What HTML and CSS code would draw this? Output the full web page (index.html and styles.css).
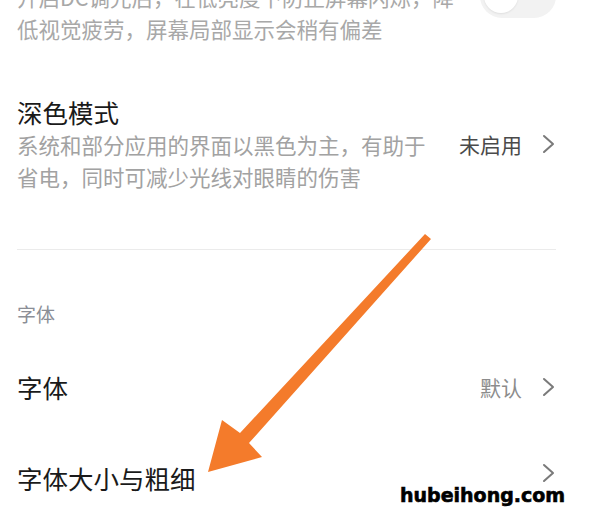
FILE: index.html
```html
<!DOCTYPE html>
<html lang="zh">
<head>
<meta charset="utf-8">
<link rel="stylesheet" href="styles.css">
</head>
<body>
<div class="screen">
  <div class="page">
    <div class="row row-dc">
      <div class="desc desc-dc">开启DC调光后，在低亮度下防止屏幕闪烁，降低视觉疲劳，屏幕局部显示会稍有偏差</div>
      <div class="switch"><span class="knob"></span></div>
    </div>

    <div class="row row-dark">
      <div class="text">
        <div class="title">深色模式</div>
        <div class="desc">系统和部分应用的界面以黑色为主，有助于省电，同时可减少光线对眼睛的伤害</div>
      </div>
      <div class="value">
        <span class="value-text dark">未启用</span>
        <svg class="chev" viewBox="0 0 14 20" width="14" height="20"><polyline points="2,2 11,10 2,18" /></svg>
      </div>
    </div>

    <div class="divider"></div>

    <div class="section">字体</div>

    <div class="row row-font">
      <div class="title">字体</div>
      <div class="value">
        <span class="value-text">默认</span>
        <svg class="chev" viewBox="0 0 14 20" width="14" height="20"><polyline points="2,2 11,10 2,18" /></svg>
      </div>
    </div>

    <div class="row row-size">
      <div class="title">字体大小与粗细</div>
      <div class="value">
        <svg class="chev" viewBox="0 0 14 20" width="14" height="20"><polyline points="2,2 11,10 2,18" /></svg>
      </div>
    </div>
  </div>

  <svg class="arrow" viewBox="0 0 589 521" width="589" height="521">
    <polygon points="425,234 431,239 249,443 262,457 208,472 222,420 240,433" />
  </svg>

  <div class="watermark">hubeihong.com</div>
</div>
</body>
</html>
```

FILE: styles.css
```css
html, body {
  margin: 0;
  padding: 0;
  background: #ffffff;
}

body {
  font-family: "Noto Sans CJK SC", "Noto Sans", sans-serif;
  color: #1c1c1c;
  overflow: hidden;
}

.screen {
  position: relative;
  width: 589px;
  height: 521px;
  overflow: hidden;
}

.page {
  margin-top: -19px;
  padding: 0 33px 0 17px;
}

.row {
  display: flex;
  justify-content: space-between;
  align-items: center;
}

.text {
  width: 420px;
}

.desc {
  font-size: 21.5px;
  line-height: 32px;
  color: #a2a2a2;
}

.desc-dc {
  width: 456px;
  color: #a8a8a8;
}

.row-dc {
  align-items: flex-start;
}

.switch {
  margin-top: -7px;
  width: 76px;
  height: 44px;
  border-radius: 22px;
  background: #f2f2f2;
  display: flex;
  align-items: center;
  padding-left: 4px;
  box-sizing: border-box;
  flex-shrink: 0;
}

.knob {
  width: 34px;
  height: 34px;
  border-radius: 50%;
  background: #ffffff;
  box-shadow: 0 1px 2px rgba(0, 0, 0, 0.08);
}

.row-dark {
  margin-top: 50px;
}

.title {
  font-size: 25.5px;
  line-height: 34px;
  color: #1a1a1a;
}

.value {
  display: flex;
  align-items: center;
  gap: 20px;
}

.value-text {
  font-size: 21px;
  color: #8c8c8c;
}

.value-text.dark {
  color: #4a4a4a;
}

.chev {
  display: block;
}

.chev polyline {
  fill: none;
  stroke: #7a7a7a;
  stroke-width: 2;
  stroke-linecap: round;
  stroke-linejoin: round;
}

.divider {
  margin-top: 56px;
  height: 1px;
  background: #ebebeb;
}

.section {
  margin-top: 50px;
  font-size: 19px;
  line-height: 28px;
  color: #8b8e96;
}

.row-font {
  margin-top: 42px;
}

.row-size {
  margin-top: 57px;
}

.row-size .value {
  margin-top: -10px;
}

.arrow {
  position: absolute;
  left: 0;
  top: 0;
}

.arrow polygon {
  fill: #f47b2b;
}

.watermark {
  position: absolute;
  left: 400px;
  top: 481px;
  font-family: "DejaVu Sans", sans-serif;
  font-weight: 900;
  font-size: 19px;
  line-height: 28px;
  color: #000000;
  -webkit-text-stroke: 0.6px #000000;
}
```
